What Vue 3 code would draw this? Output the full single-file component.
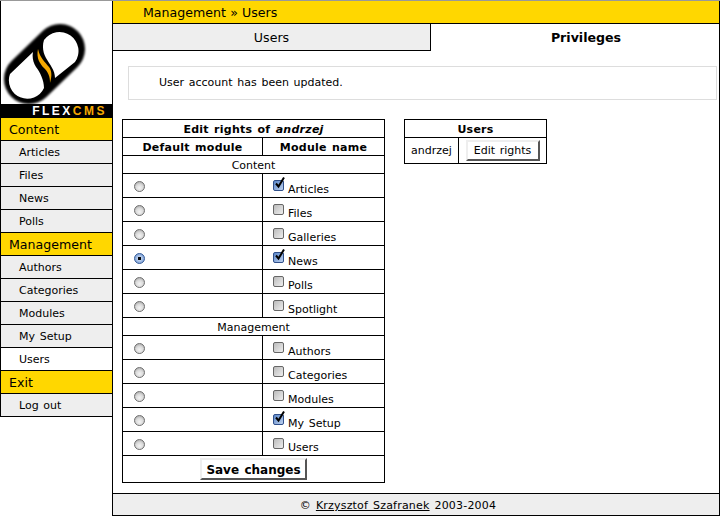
<script setup>
const sideGroups = [
  { title: 'Content', items: ['Articles', 'Files', 'News', 'Polls'] },
  { title: 'Management', items: ['Authors', 'Categories', 'Modules', 'My Setup', 'Users'] },
  { title: 'Exit', items: ['Log out'] },
]
const rightGroups = [
  {
    title: 'Content',
    rows: [
      { name: 'Articles', on: true, def: false },
      { name: 'Files', on: false, def: false },
      { name: 'Galleries', on: false, def: false },
      { name: 'News', on: true, def: true },
      { name: 'Polls', on: false, def: false },
      { name: 'Spotlight', on: false, def: false },
    ],
  },
  {
    title: 'Management',
    rows: [
      { name: 'Authors', on: false, def: false },
      { name: 'Categories', on: false, def: false },
      { name: 'Modules', on: false, def: false },
      { name: 'My Setup', on: true, def: false },
      { name: 'Users', on: false, def: false },
    ],
  },
]
</script>

<template>
  <div class="shell">
    <aside class="side">
      <div class="logo">
        <svg class="mark" width="111" height="103" viewBox="1 1 111 103">
          <defs>
            <filter id="soft" filterUnits="userSpaceOnUse" x="0" y="0" width="113" height="105">
              <feGaussianBlur stdDeviation="1.1" />
            </filter>
            <filter id="edge" filterUnits="userSpaceOnUse" x="0" y="0" width="113" height="105">
              <feGaussianBlur stdDeviation="0.4" />
            </filter>
          </defs>
          <line x1="29" y1="79" x2="60" y2="49" stroke="#000" stroke-width="50" stroke-linecap="round" filter="url(#soft)" />
          <g filter="url(#edge)">
            <path d="M44 40 A19 19 0 1 1 75 62 L55 78 C55 70 50 65 46 58 C43 53 42 46 44 40 Z" fill="#fff" />
            <path d="M10 74 A18.4 18.4 0 0 0 44 88 C44 80 40 72 36 67 C33 62 32 57 33 52 Z" fill="#fff" />
          </g>
          <path d="M38 49 C36 58 40 64 44 68 C48 72 50 76 50 83 C52 76 52 71 49 67 C45 62 40 58 38 49 Z" fill="#f5a800" />
        </svg>
        <div class="brand"><span>FLEX</span><span class="cms">CMS</span></div>
      </div>
      <template v-for="g in sideGroups" :key="g.title">
        <div class="side-title">{{ g.title }}</div>
        <div
          v-for="it in g.items"
          :key="it"
          class="side-item"
          :class="{ current: it === 'Users' }"
        >{{ it }}</div>
      </template>
    </aside>

    <main class="main">
      <div class="crumb">Management » Users</div>
      <div class="tabs">
        <div class="tab off">Users</div>
        <div class="tab on">Privileges</div>
      </div>
      <div class="body">
        <div class="msg">User account has been updated.</div>
        <div class="tables">
          <table class="rights">
            <colgroup><col class="c1" /><col class="c2" /></colgroup>
            <tbody>
              <tr class="h"><th colspan="2">Edit rights of <em>andrzej</em></th></tr>
              <tr class="h"><th>Default module</th><th>Module name</th></tr>
              <template v-for="g in rightGroups" :key="g.title">
                <tr class="h"><td colspan="2" class="center">{{ g.title }}</td></tr>
                <tr v-for="r in g.rows" :key="r.name" class="row">
                  <td class="rad-cell"><input class="radio" type="radio" name="def" :checked="r.def" /></td>
                  <td class="chk-cell">
                    <label class="chk-label">
                      <span class="chk-wrap">
                        <input class="chk" type="checkbox" :checked="r.on" />
                        <svg v-if="r.on" class="tick" width="13" height="14" viewBox="0 0 13 14">
                          <path d="M3 7.5 L5.5 10.5 L11 1.5" fill="none" stroke="#000" stroke-width="2" />
                        </svg>
                      </span>
                      <span class="chk-text">{{ r.name }}</span>
                    </label>
                  </td>
                </tr>
              </template>
              <tr class="save"><td colspan="2" class="center"><button class="btn strong" type="button">Save changes</button></td></tr>
            </tbody>
          </table>

          <table class="users">
            <colgroup><col class="u1" /><col class="u2" /></colgroup>
            <tbody>
              <tr class="h"><th colspan="2">Users</th></tr>
              <tr class="urow">
                <td class="center">andrzej</td>
                <td class="center"><button class="btn" type="button">Edit rights</button></td>
              </tr>
            </tbody>
          </table>
        </div>
      </div>
      <footer class="foot">© <a href="#" class="link">Krzysztof Szafranek</a> 2003-2004</footer>
    </main>
  </div>
</template>

<style>
html, body { margin: 0; background: #fff; }
</style>

<style scoped>
.shell {
  display: flex;
  box-sizing: border-box;
  width: 720px;
  height: 516px;
  border-top: 1px solid #999;
  font-family: "DejaVu Sans", Verdana, sans-serif;
  font-size: 11px;
  word-spacing: 1.2px;
  color: #000;
  background: #fff;
}
.side {
  width: 112px;
  box-sizing: border-box;
  flex: none;
  align-self: flex-start;
  border-left: 1px solid #000;
}
.logo {
  display: flex;
  flex-direction: column;
  height: 117px;
}
.mark { display: block; flex: none; }
.brand {
  height: 14px;
  background: #000;
  color: #fff;
  font-family: "Liberation Sans", Arial, sans-serif;
  font-weight: 700;
  font-size: 12px;
  line-height: 15px;
  letter-spacing: 2.5px;
  text-align: right;
  padding-right: 5px;
}
.cms { color: #f5a800; }
.side-title {
  box-sizing: border-box;
  height: 23px;
  line-height: 24px;
  padding-left: 8px;
  background: #ffd700;
  border-bottom: 1px solid #000;
  font-size: 12.6px;
}
.side-item {
  box-sizing: border-box;
  height: 23px;
  line-height: 24px;
  padding-left: 18px;
  background: #eee;
  border-bottom: 1px solid #000;
}
.side-item.current { background: #fff; }
.main {
  flex: 1;
  min-width: 0;
  display: flex;
  flex-direction: column;
  border-left: 1px solid #000;
  border-right: 1px solid #000;
  border-bottom: 1px solid #000;
}
.crumb {
  box-sizing: border-box;
  height: 23px;
  line-height: 24px;
  padding-left: 30px;
  background: #ffd700;
  border-bottom: 1px solid #000;
  font-size: 12.6px;
  word-spacing: 0.2px;
}
.tabs { display: flex; height: 27px; }
.tab {
  box-sizing: border-box;
  text-align: center;
  line-height: 28px;
  font-size: 12.6px;
}
.tab.off {
  width: 318px;
  background: #eee;
  border-right: 1px solid #000;
  border-bottom: 1px solid #000;
}
.tab.on { flex: 1; font-weight: 700; padding-left: 22px; }
.body {
  flex: 1;
  padding: 15px 2px 0 9px;
}
.msg {
  box-sizing: border-box;
  height: 34px;
  margin-left: 6px;
  line-height: 31px;
  padding-left: 30px;
  border: 1px solid #ddd;
}
.tables {
  display: flex;
  align-items: flex-start;
  gap: 19px;
  margin-top: 19px;
}
table {
  border-collapse: collapse;
  table-layout: fixed;
  flex: none;
}
th, td {
  border: 1px solid #000;
  padding: 0;
  font-size: 11px;
}
th { letter-spacing: 0.25px; }
.rights { width: 262px; }
.c1 { width: 140px; }
.c2 { width: 122px; }
.h th, .h td { height: 15px; line-height: 15px; padding: 2px 0 0; }
.center { text-align: center; }
.row td { height: 21px; }
.chk-cell { padding-top: 2px; }
.rad-cell { padding: 1px 0 0 11px; }
.radio {
  appearance: none;
  display: block;
  width: 11px;
  height: 11px;
  margin: 0;
  border-radius: 50%;
  border: 1px solid #707070;
  box-sizing: border-box;
  background: radial-gradient(circle at 50% 65%, #f4f4f4 0, #dcdcdc 45%, #9c9c9c 100%);
}
.radio:checked {
  border-color: #3a5f9a;
  background: radial-gradient(circle, #000 0, #000 22%, #bcd0ee 30%, #5a86c8 100%);
}
.chk-label { display: flex; align-items: center; padding-left: 10px; }
.chk-wrap { position: relative; display: block; width: 11px; height: 11px; margin-top: -3px; }
.chk {
  appearance: none;
  display: block;
  box-sizing: border-box;
  width: 11px;
  height: 11px;
  margin: 0;
  border-radius: 2px;
  border: 1px solid #666;
  background: linear-gradient(135deg, #bbb, #eee);
}
.chk:checked {
  border-color: #2f4f8a;
  background: linear-gradient(135deg, #5a86c8, #bcd0ee);
}
.tick { position: absolute; left: 0; top: -4px; }
.chk-text { margin-left: 4px; margin-top: 6px; line-height: 13px; }
.save td { height: 26px; }
.btn {
  box-sizing: border-box;
  font-family: inherit;
  font-size: 11px;
  word-spacing: 1.2px;
  color: #000;
  background: #fff;
  padding: 0;
  border-style: solid;
  border-width: 2px;
  border-color: #eee #555 #555 #eee;
  display: inline-block;
  width: 74px;
  height: 21px;
  vertical-align: middle;
}
.btn.strong { width: 107px; height: 22px; padding-top: 2px; font-weight: 700; font-size: 12px; }
.users { width: 142px; }
.u1 { width: 54px; }
.u2 { width: 88px; }
.urow td { height: 25px; }
.foot {
  box-sizing: border-box;
  height: 22px;
  line-height: 23px;
  padding-right: 36px;
  text-align: center;
  background: #eee;
  border-top: 1px solid #000;
  letter-spacing: 0.2px;
}
.link { color: #000; text-decoration: underline; }
</style>
